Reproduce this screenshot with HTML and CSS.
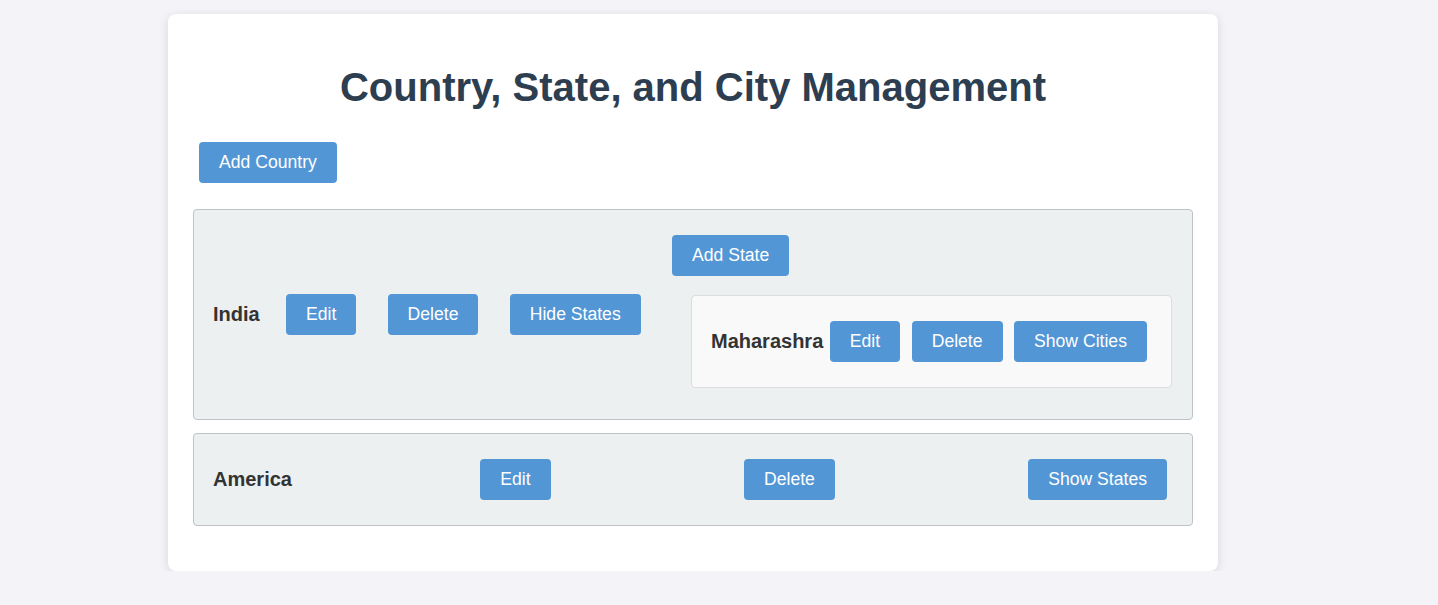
FILE: index.html
```html
<!DOCTYPE html>
<html lang="en">
<head>
<meta charset="utf-8">
<title>Country, State, and City Management</title>
<link rel="stylesheet" href="styles.css">
</head>
<body>
  <div class="container">
    <h1 class="title">Country, State, and City Management</h1>
    <div class="toolbar">
      <button class="btn">Add Country</button>
    </div>
    <div class="country">
      <span class="name">India</span>
      <button class="btn">Edit</button>
      <button class="btn">Delete</button>
      <button class="btn">Hide States</button>
      <div class="states">
        <button class="btn">Add State</button>
        <div class="state">
          <span class="name">Maharashra</span>
          <button class="btn">Edit</button>
          <button class="btn">Delete</button>
          <button class="btn">Show Cities</button>
        </div>
      </div>
    </div>
    <div class="country">
      <span class="name">America</span>
      <button class="btn">Edit</button>
      <button class="btn">Delete</button>
      <button class="btn">Show States</button>
    </div>
  </div>
</body>
</html>
```
FILE: styles.css
```css
* { box-sizing: border-box; }

body {
  margin: 0;
  padding-top: 14px;
  background: #f4f4f8;
  font-family: "Liberation Sans", Arial, sans-serif;
  font-size: 16px;
  color: #333;
}

.container {
  width: 1050px;
  margin-left: 168px;
  padding: 25px;
  background: #fff;
  border-radius: 8px;
  box-shadow: 0 2px 10px rgba(0, 0, 0, 0.12);
}

.title {
  margin: 25px 0 27px;
  font-size: 40px;
  font-weight: bold;
  line-height: 46px;
  text-align: center;
  color: #2c3e50;
}

.btn {
  margin: 5px;
  padding: 10px 20px;
  border: none;
  border-radius: 4px;
  background: #5296d5;
  color: #fff;
  font-family: "Liberation Sans", Arial, sans-serif;
  font-size: 17.6px;
  line-height: 21px;
  cursor: pointer;
}

.toolbar {
  display: flex;
  padding-left: 1px;
  margin-bottom: 21px;
}

.country {
  display: flex;
  justify-content: space-between;
  align-items: center;
  padding: 20px 20px 20px 19px;
  margin-bottom: 13px;
  background: #ecf0f1;
  border: 1px solid #bdc3c7;
  border-radius: 4px;
}

.country:last-child {
  margin-bottom: 20px;
}

.name {
  font-size: 20px;
  font-weight: bold;
  color: #333;
}

.states {
  width: 505px;
  display: flex;
  flex-direction: column;
  align-items: flex-start;
}

.state {
  align-self: stretch;
  display: flex;
  justify-content: space-between;
  align-items: center;
  margin: 14px 0 11px 24px;
  padding: 20px 19px 20px 19px;
  background: #f9f9f9;
  border: 1px solid #ddd;
  border-radius: 4px;
}
```
